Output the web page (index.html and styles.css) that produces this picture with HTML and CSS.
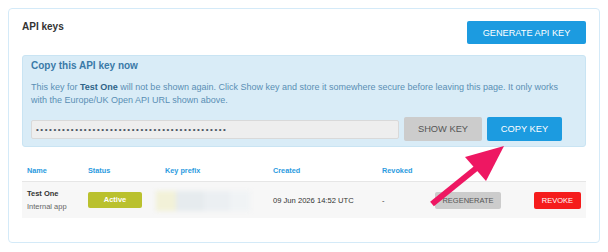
FILE: index.html
```html
<!DOCTYPE html>
<html>
<head>
<meta charset="utf-8">
<link rel="stylesheet" href="styles.css">
</head>
<body>
<div class="card">
  <div class="card-head">
    <h2 class="title">API keys</h2>
    <button class="btn btn-blue btn-lg">GENERATE API KEY</button>
  </div>
  <div class="alert">
    <h3 class="alert-title">Copy this API key now</h3>
    <p class="alert-text">This key for <b>Test One</b> will not be shown again. Click Show key and store it somewhere secure before leaving this page. It only works with the Europe/UK Open API URL shown above.</p>
    <div class="key-row">
      <div class="key-input">••••••••••••••••••••••••••••••••••••••••••••</div>
      <button class="btn btn-grey btn-md">SHOW KEY</button>
      <button class="btn btn-blue btn-md">COPY KEY</button>
    </div>
  </div>
  <div class="table">
    <div class="tr th">
      <div class="c1">Name</div>
      <div class="c2">Status</div>
      <div class="c3 c3-head">Key prefix</div>
      <div class="c4">Created</div>
      <div class="c5">Revoked</div>
      <div class="c6"></div>
      <div class="c7"></div>
    </div>
    <div class="tr td">
      <div class="c1"><div class="name">Test One</div><div class="sub">Internal app</div></div>
      <div class="c2"><span class="badge">Active</span></div>
      <div class="c3"><div class="blur"><span class="b1"></span><span class="b2"></span><span class="b3"></span><span class="b4"></span></div></div>
      <div class="c4">09 Jun 2026 14:52 UTC</div>
      <div class="c5">-</div>
      <div class="c6"><button class="btn btn-grey btn-sm">REGENERATE</button></div>
      <div class="c7"><button class="btn btn-red btn-sm">REVOKE</button></div>
    </div>
  </div>
</div>
<svg class="arrow" width="608" height="252" viewBox="0 0 608 252">
  <line x1="432" y1="204" x2="479" y2="166" stroke="#ee1762" stroke-width="6" stroke-linecap="butt"/>
  <polygon points="504,146 465,157 486,181" fill="#ee1762"/>
</svg>
</body>
</html>
```
FILE: styles.css
```css
* { box-sizing: border-box; }
body {
  margin: 8px;
  font-family: "Liberation Sans", Arial, sans-serif;
  color: #333;
  background: #fff;
  position: relative;
}
.card {
  width: 592px;
  height: 235px;
  border: 1px solid #d4eaf8;
  border-radius: 4px;
  padding: 12px 13px 0 13px;
}
.card-head {
  display: flex;
  justify-content: space-between;
  align-items: flex-start;
  height: 23px;
}
.title {
  margin: 0;
  font-size: 10px;
  line-height: 12px;
  font-weight: bold;
  color: #333;
}
.btn {
  border: none;
  border-radius: 2px;
  font-family: "Liberation Sans", Arial, sans-serif;
  padding: 0;
  text-align: center;
  white-space: nowrap;
}
.btn-blue { background: #1c9be0; color: #fff; }
.btn-grey { background: #cccccc; color: #555; }
.btn-red { background: #f51c1c; color: #fff; }
.btn-lg { width: 119px; height: 23px; font-size: 9.2px; }
.btn-md { width: 78px; height: 24px; font-size: 9.3px; }
.btn-md.btn-blue { width: 75px; }
.btn-sm { height: 17px; font-size: 7.5px; }
.c6 .btn-sm { width: 66px; }
.c7 .btn-sm { width: 47px; }
.alert {
  margin-top: 11px;
  background: #d9ecf7;
  border: 1px solid #c9e4f3;
  border-radius: 3px;
  padding: 4px 8px 5px 8px;
}
.alert-title {
  margin: 0;
  font-size: 10px;
  line-height: 12px;
  font-weight: bold;
  color: #3a7aa8;
}
.alert-text {
  margin: 9px 0 0 0;
  max-width: 528px;
  font-size: 9px;
  line-height: 12.5px;
  color: #5a8fb5;
}
.alert-text b { color: #2f6488; }
.key-row {
  display: flex;
  align-items: center;
  margin-top: 11px;
  gap: 5px;
}
.key-input {
  width: 368px;
  height: 19px;
  background: #eeeeee;
  border: 1px solid #d9d9d9;
  border-radius: 2px;
  font-size: 8px;
  line-height: 17px;
  letter-spacing: 1.55px;
  padding-left: 4px;
  color: #4a5562;
  overflow: hidden;
  white-space: nowrap;
}
.table { margin-top: 0; }
.tr {
  display: grid;
  grid-template-columns: 61px 68px 117px 109px 53px 99px 57px;
  width: 564px;
}
.tr > div { padding-left: 5px; }
.th {
  height: 35px;
  align-items: end;
  padding-bottom: 6.5px;
  font-size: 7.3px;
  line-height: 9px;
  font-weight: bold;
  color: #2b9be0;
  border-bottom: 1px solid #e6e6e6;
}
.c3-head { padding-left: 14px !important; }
.td {
  height: 36px;
  background: #f7f7f7;
  align-items: center;
  font-size: 7.6px;
  color: #333;
}
.name { font-weight: bold; font-size: 7.5px; line-height: 13px; }
.sub { font-size: 7.5px; line-height: 13px; color: #666; }
.badge {
  display: block;
  width: 54px;
  height: 16px;
  background: #bac12e;
  color: #fff;
  font-weight: bold;
  font-size: 7.5px;
  line-height: 16px;
  text-align: center;
  border-radius: 2px;
}
.c3 { padding-left: 5px; }
.blur {
  width: 94px;
  height: 20px;
  display: flex;
  filter: blur(2px);
  margin-top: 1px;
}
.blur span { display: block; height: 100%; }
.b1 { width: 20px; background: #f2f1d8; }
.b2 { width: 28px; background: #e6ebee; }
.b3 { width: 26px; background: #ebeff2; }
.b4 { width: 20px; background: #f0f3f5; }
.c4 { white-space: nowrap; }
.arrow {
  position: absolute;
  left: -8px;
  top: -8px;
  pointer-events: none;
}
```
